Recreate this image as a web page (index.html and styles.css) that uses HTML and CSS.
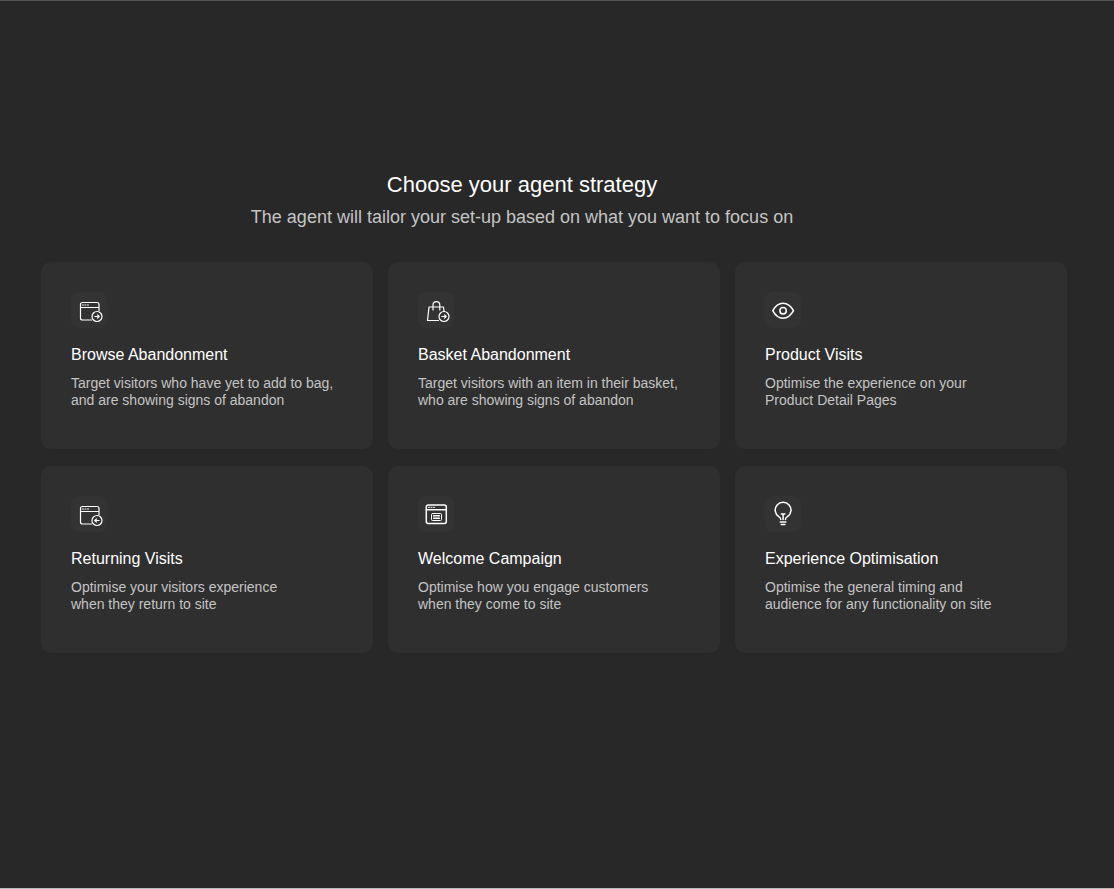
FILE: index.html
```html
<!DOCTYPE html>
<html lang="en">
<head>
    <meta charset="UTF-8">
    <meta name="viewport" content="width=device-width, initial-scale=1.0">
    <title>Choose your agent strategy</title>
    <link rel="stylesheet" href="styles.css">
</head>
<body>
    <main class="strategy-page">
        <header class="strategy-header">
            <h1>Choose your agent strategy</h1>
            <p>The agent will tailor your set-up based on what you want to focus on</p>
        </header>

        <div class="card-grid">
            <button type="button" class="card">
                <span class="card-icon">
                    <svg viewBox="0 0 36 36" aria-hidden="true">
                        <path d="M20.5 28h-9a2 2 0 0 1-2-2V12.500a2 2 0 0 1 2-2H26a2 2 0 0 1 2 2V19M9.500 15.500H28"/>
                        <path class="dots" d="M11.500 13h1M14 13h1M16.500 13h1"/>
                        <circle cx="26" cy="24.500" r="5"/>
                        <path d="M23.800 24.500h4.400M26.500 22.800l1.700 1.700-1.700 1.700"/>
                    </svg>
                </span>
                <span class="card-title">Browse Abandonment</span>
                <span class="card-text">Target visitors who have yet to add to bag,<br>and are showing signs of abandon</span>
            </button>

            <button type="button" class="card">
                <span class="card-icon">
                    <svg viewBox="0 0 36 36" aria-hidden="true">
                        <path d="M20.500 28.500h-11L11 15h14.500l.5 4.500"/>
                        <path d="M15 18v-5a3.400 3.400 0 0 1 6.800 0v5"/>
                        <circle cx="26" cy="24.500" r="5"/>
                        <path d="M23.800 24.500h4.400M26.500 22.800l1.700 1.700-1.700 1.700"/>
                    </svg>
                </span>
                <span class="card-title">Basket Abandonment</span>
                <span class="card-text">Target visitors with an item in their basket,<br>who are showing signs of abandon</span>
            </button>

            <button type="button" class="card">
                <span class="card-icon">
                    <svg class="bold" viewBox="0 0 36 36" aria-hidden="true">
                        <path d="M7.800 18.700C10.200 14 13.900 11.200 18.100 11.200S25.900 14 28.500 18.700C25.900 23.400 22.300 26.300 18.100 26.300S10.200 23.400 7.800 18.700z"/>
                        <circle cx="18.100" cy="18.700" r="3.200"/>
                    </svg>
                </span>
                <span class="card-title">Product Visits</span>
                <span class="card-text">Optimise the experience on your<br>Product Detail Pages</span>
            </button>

            <button type="button" class="card">
                <span class="card-icon">
                    <svg viewBox="0 0 36 36" aria-hidden="true">
                        <path d="M20.500 28h-9a2 2 0 0 1-2-2V12.500a2 2 0 0 1 2-2H26a2 2 0 0 1 2 2V19M9.500 15.500H28"/>
                        <path class="dots" d="M11.500 13h1M14 13h1M16.500 13h1"/>
                        <circle cx="26" cy="24.500" r="5"/>
                        <path d="M28.200 24.500h-4.400M25.500 22.800l-1.700 1.700 1.700 1.700"/>
                    </svg>
                </span>
                <span class="card-title">Returning Visits</span>
                <span class="card-text">Optimise your visitors experience<br>when they return to site</span>
            </button>

            <button type="button" class="card">
                <span class="card-icon">
                    <svg class="bold" viewBox="0 0 36 36" aria-hidden="true">
                        <rect x="8.300" y="9" width="20" height="18.500" rx="2"/>
                        <path d="M8.300 13.700h20"/>
                        <path class="dots" d="M10.500 11.300h1M13 11.300h1M15.500 11.300h1"/>
                        <rect class="thin" x="13.500" y="17.500" width="10" height="7" rx="1"/>
                        <path class="thin" d="M15.500 19.500h6M15.500 21h6M15.500 22.500h6"/>
                    </svg>
                </span>
                <span class="card-title">Welcome Campaign</span>
                <span class="card-text">Optimise how you engage customers<br>when they come to site</span>
            </button>

            <button type="button" class="card">
                <span class="card-icon">
                    <svg class="bold" viewBox="0 0 36 36" aria-hidden="true">
                        <path d="M15.800 23.500c0-1.400-.8-2-2-2.800a7.900 7.900 0 1 1 8.600 0c-1.200.8-2 1.400-2 2.800"/>
                        <path d="M16.300 18h3.600M18.100 18v5.500M15.300 26h5.600M16.300 28.500h3.600"/>
                    </svg>
                </span>
                <span class="card-title">Experience Optimisation</span>
                <span class="card-text">Optimise the general timing and<br>audience for any functionality on site</span>
            </button>
        </div>
    </main>
</body>
</html>
```
FILE: styles.css
```css
* {
    margin: 0;
    padding: 0;
    box-sizing: border-box;
}

body {
    background: #282828;
    color: #fff;
    font-family: "Liberation Sans", Arial, sans-serif;
}

.strategy-page {
    min-height: 100vh;
    padding: 170px 47px 40px 41px;
    border-top: 1px solid #555;
    border-bottom: 1px solid #bbb;
}

/* heading block */
.strategy-header {
    padding-right: 64px;
    margin-bottom: 32px;
    text-align: center;
}

.strategy-header h1 {
    font-size: 22px;
    font-weight: 400;
    line-height: 28px;
    margin-bottom: 5px;
}

.strategy-header p {
    color: #c4c4c4;
    font-size: 18px;
    line-height: 26px;
}

/* strategy cards */
.card-grid {
    display: grid;
    grid-template-columns: repeat(3, 1fr);
    gap: 17px 15px;
}

.card {
    display: flex;
    flex-direction: column;
    align-items: flex-start;
    min-height: 187px;
    padding: 30px;
    border: 0;
    border-radius: 10px;
    background: #2f2f2f;
    color: #fff;
    font-family: inherit;
    text-align: left;
    cursor: pointer;
}

.card:hover {
    background: #353535;
}

.card-icon {
    width: 36px;
    height: 36px;
    margin-bottom: 17px;
    border-radius: 8px;
    background: #333;
}

.card-icon svg {
    display: block;
    width: 36px;
    height: 36px;
    fill: none;
    stroke: #fff;
    stroke-width: 1.2;
    stroke-linecap: round;
    stroke-linejoin: round;
}

.card-icon .bold {
    stroke-width: 1.5;
}

.card-icon .thin,
.card-icon .dots {
    stroke-width: 1;
}

.card-title {
    margin-bottom: 10px;
    font-size: 16px;
    line-height: 20px;
}

.card-text {
    color: #c4c4c4;
    font-size: 14px;
    line-height: 17px;
}
```
